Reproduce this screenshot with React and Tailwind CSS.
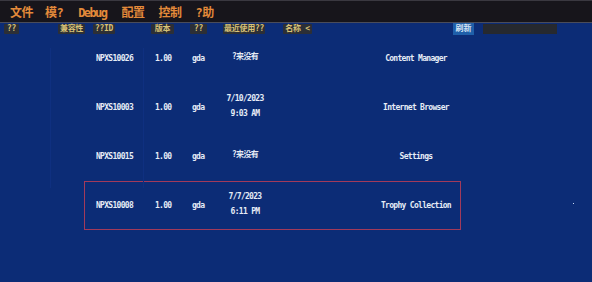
const menus = [
  { t: '文件', ml: 'ml-[10px]', tr: 'tracking-[-0.5px]' },
  { t: '模?', ml: 'ml-[12px]', tr: 'tracking-[-0.5px]' },
  { t: 'Debug', ml: 'ml-[15px]', tr: 'tracking-[-1.6px]' },
  { t: '配置', ml: 'ml-[15px]', tr: 'tracking-[-0.5px]' },
  { t: '控制', ml: 'ml-[14px]', tr: 'tracking-[-0.5px]' },
  { t: '?助', ml: 'ml-[14px]', tr: 'tracking-[-0.5px]' },
];

const heads = [
  { t: '??', ml: 'ml-[4px]', w: 'w-[15px]' },
  { t: '兼容性', ml: 'ml-[39px]', w: 'w-[27px]' },
  { t: '??ID', ml: 'ml-[8px]', w: 'w-[22px]' },
  { t: '版本', ml: 'ml-[36px]', w: 'w-[23px]' },
  { t: '??', ml: 'ml-[16px]', w: 'w-[17px]' },
  { t: '最近使用??', ml: 'ml-[16px]', w: 'w-[42px]' },
  { t: '名称 <', ml: 'ml-[18px]', w: 'w-[29px]' },
];

const rows = [
  { id: 'NPXS10026', ver: '1.00', pub: 'gda', date: ['?来没有'], name: 'Content Manager' },
  { id: 'NPXS10003', ver: '1.00', pub: 'gda', date: ['7/10/2023', '9:03 AM'], name: 'Internet Browser' },
  { id: 'NPXS10015', ver: '1.00', pub: 'gda', date: ['?来没有'], name: 'Settings' },
  { id: 'NPXS10008', ver: '1.00', pub: 'gda', date: ['7/7/2023', '6:11 PM'], name: 'Trophy Collection', selected: true },
];

const mono = { fontFamily: '"DejaVu Sans Mono", "Noto Sans CJK SC", monospace' };

export default function App() {
  return (
    <div className="w-[592px] h-[282px] bg-[#0c2c76] overflow-hidden relative" style={mono}>
      {/* menu bar */}
      <div className="h-[23px] bg-[#17151b] border-t border-[#3a3840] border-b border-b-[#4a4c5a] flex items-center pt-[2px]">
        {menus.map((m) => (
          <span key={m.t} className={'text-[#e38a3a] text-[12px] font-bold leading-none ' + m.ml + ' ' + m.tr}>{m.t}</span>
        ))}
      </div>

      {/* header row */}
      <div className="h-[11px] flex items-center">
        {heads.map((h, i) => (
          <div key={i} className={'h-[10px] flex items-center justify-center bg-[#2c2f36] text-[#d8c277] text-[8px] font-bold leading-none tracking-[-0.3px] rounded-[1px] ' + h.ml + ' ' + h.w}>
            {h.t}
          </div>
        ))}
        <div className="ml-[141px] h-[12px] w-[21px] bg-[#1f5fa9] text-[#d8e4f4] text-[8px] font-bold flex items-center justify-center">刷新</div>
        <div className="ml-[9px] h-[10px] w-[74px] bg-[#26292f]"></div>
      </div>

      {/* faint column dividers */}
      <div className="absolute left-[50px] top-[48px] w-px h-[140px] bg-[#0f3080]"></div>
      <div className="absolute left-[143px] top-[48px] w-px h-[140px] bg-[#0f3080]"></div>
      <div className="absolute left-[573px] top-[203px] w-[1px] h-[1px] bg-[#c8d8f0]"></div>

      {/* list */}
      <div className="flex flex-col pl-[84px]">
        {rows.map((r) => (
          <div
            key={r.id}
            className={'w-[377px] h-[49px] flex items-center pl-[11px] text-[#e6ecf6] text-[8px] font-bold tracking-[-0.7px] border ' + (r.selected ? 'border-[#a33a5a]' : 'border-transparent')}
          >
            <div className="w-[59px]">{r.id}</div>
            <div className="w-[37px]">{r.ver}</div>
            <div className="w-[28px]">{r.pub}</div>
            <div className={'w-[50px] flex flex-col items-center leading-none ' + (r.date.length > 1 ? 'gap-[7px] mt-[-2px]' : 'self-start mt-[18px]')}>
              {r.date.map((d) => (
                <span key={d}>{d}</span>
              ))}
            </div>
            <div className="flex-1"></div>
            <div className="w-[88px] text-center">{r.name}</div>
          </div>
        ))}
      </div>
    </div>
  );
}
